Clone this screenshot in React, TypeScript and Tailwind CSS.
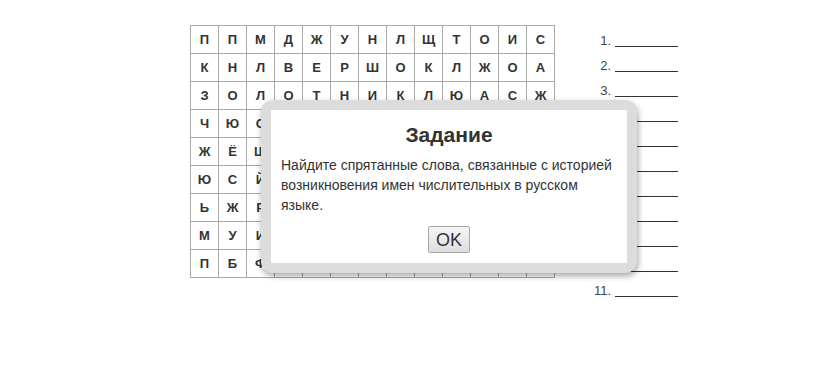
import React from "react";

// letters hidden under the dialog are left blank
const rows: string[] = [
  "ППМДЖУНЛЩТОИС",
  "КНЛВЕРШОКЛЖОА",
  "ЗОЛОТНИКЛЮАСЖ",
  "ЧЮС          ",
  "ЖЁШ          ",
  "ЮСЙ          ",
  "ЬЖР          ",
  "МУИ          ",
  "ПБФ          ",
];

export default function App() {
  return (
    <div className="relative w-[838px] h-[386px] bg-white font-['Liberation_Sans',Arial,sans-serif] text-[#333]">
      <div className="flex items-start pl-[190px] pt-[22px]">
        <div className="mt-[3px] border-l border-t border-[#a9a9a9]">
          {rows.map((row, r) => (
            <div key={r} className="flex">
              {row.split("").map((ch, c) => (
                <div
                  key={c}
                  className="w-[28px] h-[28px] border-r border-b border-[#a9a9a9] flex items-center justify-center text-[13px] font-bold text-[#333]"
                >
                  {ch.trim()}
                </div>
              ))}
            </div>
          ))}
        </div>

        <ol className="ml-[35px]">
          {Array.from({ length: 11 }).map((_, i) => (
            <li key={i} className="flex items-end h-[25px]">
              <span className="w-[21px] text-right text-[13px] leading-[13px] text-[#444]">
                {i + 1}.
              </span>
              <span className="ml-[4px] w-[63px] h-px bg-[#333]" />
            </li>
          ))}
        </ol>
      </div>

      <div className="absolute left-[261px] top-[100px] w-[376px] rounded-[12px] bg-[#dcdcdc] p-[10px] shadow-[1px_3px_6px_rgba(0,0,0,0.35)]">
        <div className="bg-white px-[10px] pt-[13px] pb-[10px]">
          <h2 className="text-center text-[21px] leading-[24px] font-bold text-[#333]">
            Задание
          </h2>
          <p className="mt-[8px] text-[14px] leading-[20px] text-[#333]">
            Найдите спрятанные слова, связанные с историей возникновения имен
            числительных в русском языке.
          </p>
          <div className="mt-[11px] flex justify-center">
            <button
              type="button"
              className="w-[42px] h-[27px] rounded-[2px] border border-[#a6a6a6] bg-gradient-to-b from-[#f6f6f6] to-[#dedede] text-[18px] leading-none text-[#333]"
            >
              OK
            </button>
          </div>
        </div>
      </div>
    </div>
  );
}
